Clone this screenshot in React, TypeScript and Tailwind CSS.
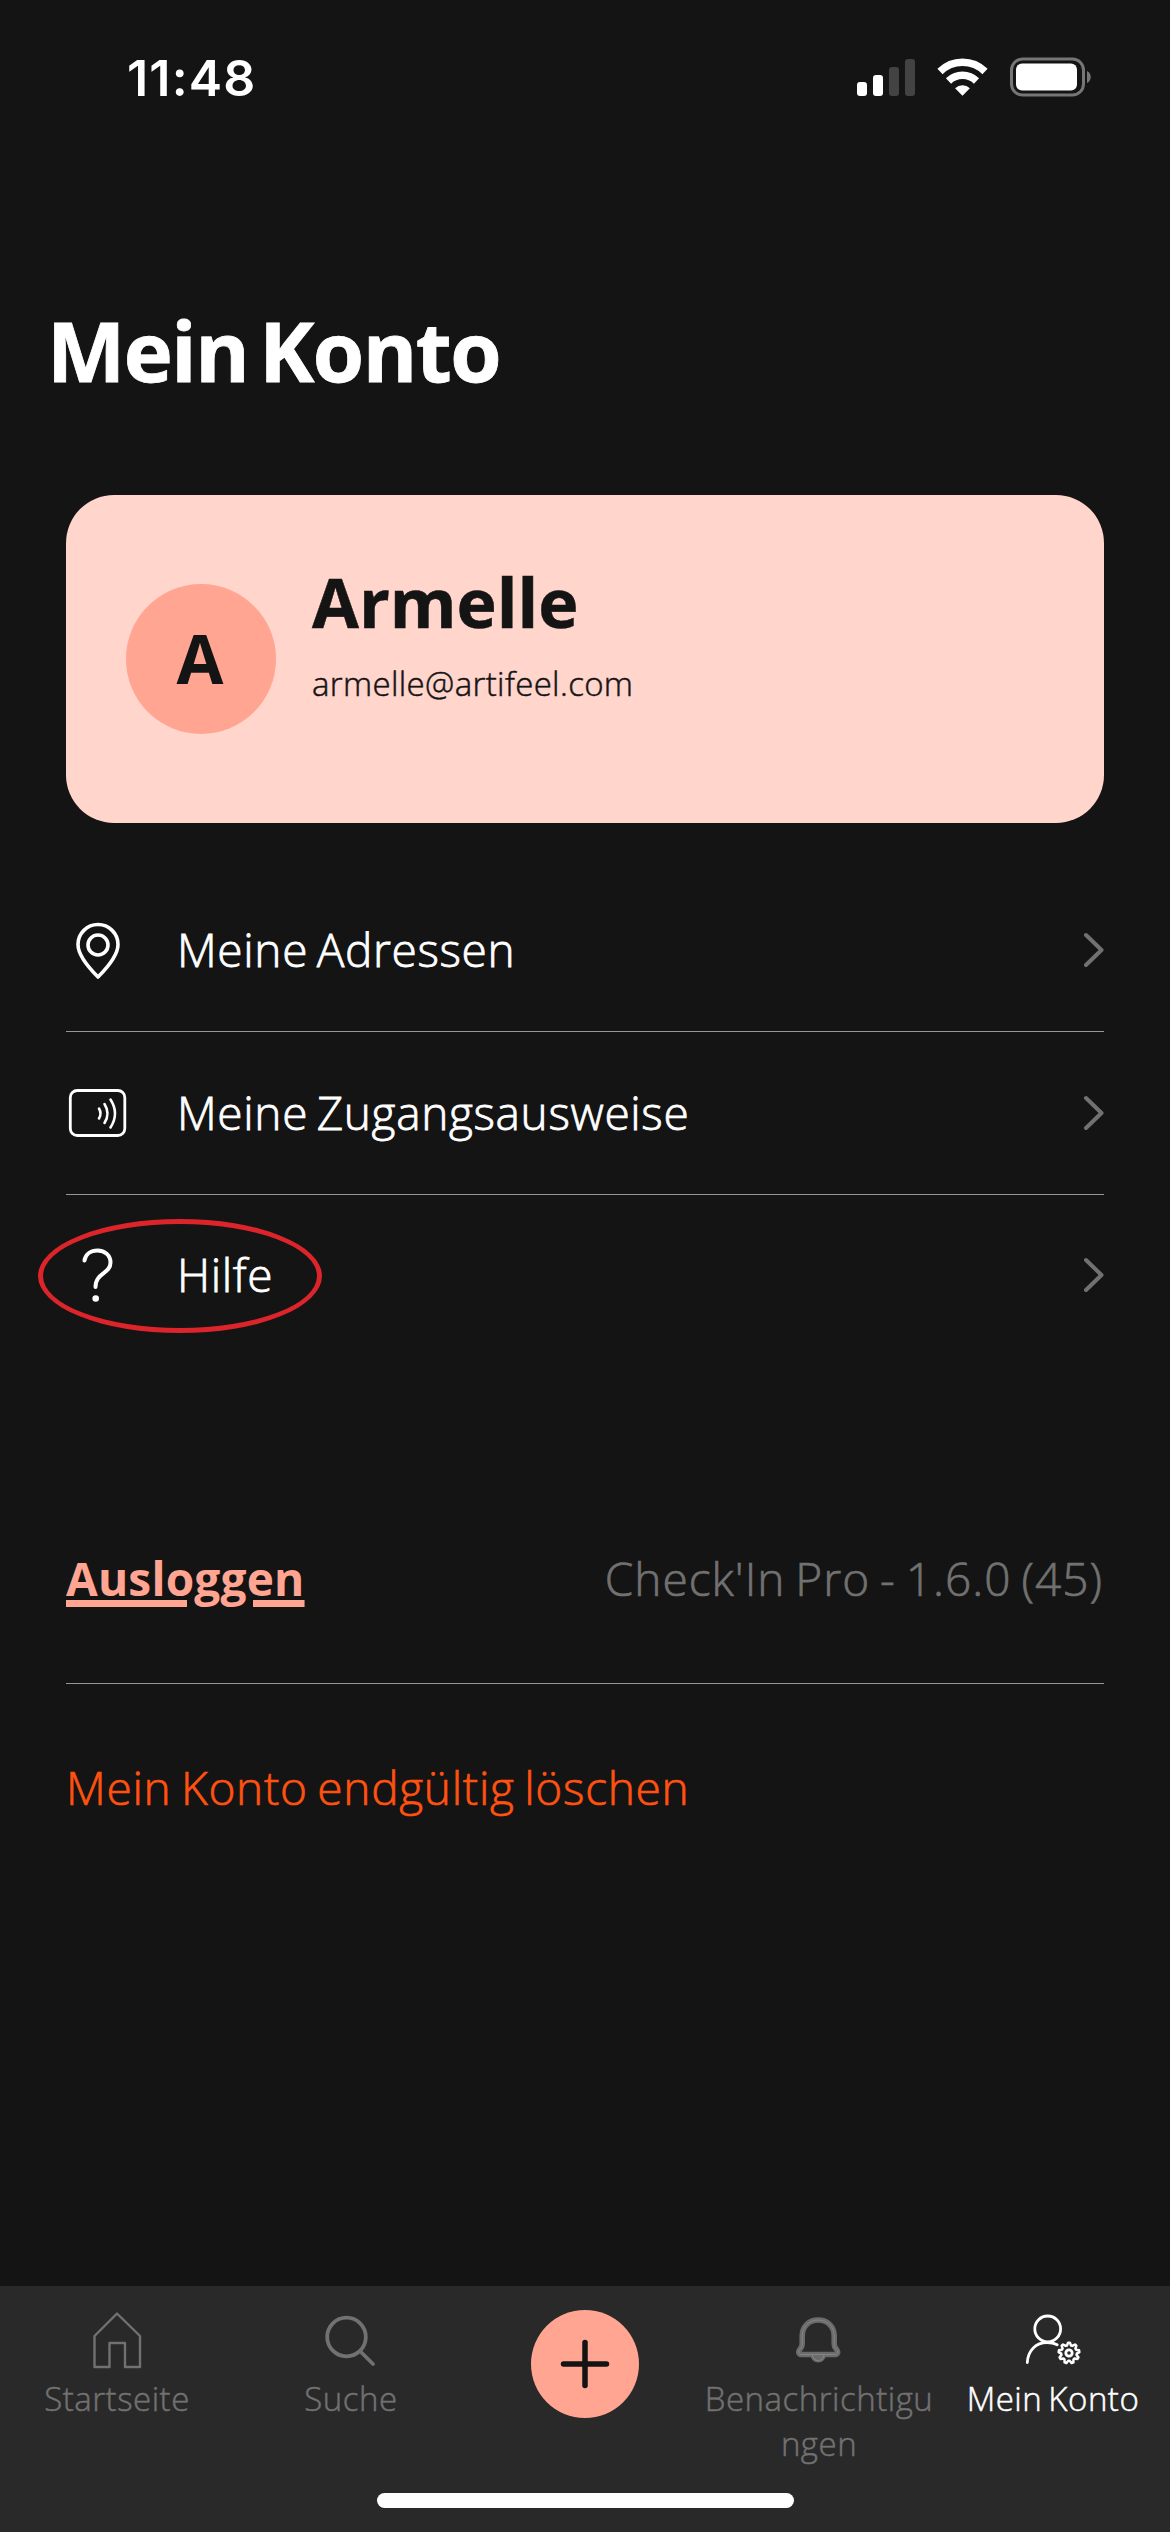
import type { ReactNode } from 'react'

function StatusBar() {
  return (
    <div className="h-[156px] pl-[127px] pr-[78px] flex items-start justify-between">
      <span className="mt-[48px] h-[60px] leading-[60px] text-[50px] font-semibold tracking-[1.2px] font-['Inter',sans-serif]">11:48</span>
      <div className="mt-[57px] flex items-center gap-[22px]">
        <svg width="58" height="38" viewBox="0 0 58 38" fill="#fff">
          <rect x="0" y="24" width="10" height="14" rx="3" />
          <rect x="16" y="17" width="10" height="21" rx="3" />
          <rect x="32" y="9" width="10" height="29" rx="3" fill="#434343" />
          <rect x="48" y="1" width="10" height="37" rx="3" fill="#434343" />
        </svg>
        <svg width="51" height="38" viewBox="0 0 51 38" fill="none" stroke="#fff" strokeWidth="7.4">
          <path d="M3 13.5a32 32 0 0 1 45 0" />
          <path d="M11.5 23a20 20 0 0 1 28 0" />
          <path d="M25.5 37.8l-7.4-7.6a11 11 0 0 1 14.8 0z" fill="#fff" stroke="none" />
        </svg>
        <svg width="82" height="40" viewBox="0 0 82 40">
          <rect x="1.5" y="2" width="72" height="36" rx="11" fill="none" stroke="#767676" strokeWidth="3" />
          <rect x="6" y="6.5" width="61" height="27" rx="6" fill="#fff" />
          <path d="M77 14c5 2 5 10 0 12z" fill="#767676" />
        </svg>
      </div>
    </div>
  )
}

function PinIcon() {
  return (
    <svg width="64" height="64" viewBox="0 0 64 64" fill="none" stroke="#fff" strokeWidth="3.6" strokeLinejoin="round">
      <path d="M32 59C25 52 12 38 12 26.500a20 20 0 0 1 40 0C52 38 39 52 32 59z" />
      <circle cx="32" cy="27" r="10" />
    </svg>
  )
}

function BadgeIcon() {
  return (
    <svg width="64" height="64" viewBox="0 0 64 64" fill="none" stroke="#fff" strokeLinecap="round">
      <rect x="4.300" y="9.500" width="54.500" height="45" rx="7" strokeWidth="2.800" />
      <path d="M33 27.500q3 5 0 10M38.500 23q6 9.500 0 19M44.500 18.500q9 14 0 28" strokeWidth="2.600" />
    </svg>
  )
}

function HelpIcon() {
  return (
    <svg width="64" height="64" viewBox="0 0 64 64" fill="none" stroke="#fff" strokeWidth="4" strokeLinecap="round">
      <path d="M18.500 17.500C19.500 11 25 7.500 31.500 7.500c7.500 0 13 5 13 12 0 11.500-15 10-15 24.500" />
      <circle cx="29.700" cy="55.500" r="3.300" fill="#fff" stroke="none" />
    </svg>
  )
}

function MenuRow({ icon, label, last }: { icon: ReactNode; label: string; last?: boolean }) {
  return (
    <div className={'flex items-center ' + (last ? 'h-[160px]' : 'h-[163px] border-b border-[#969696]')}>
      <div className="w-[111px]">{icon}</div>
      <span className="flex-1 -mt-[2px] text-[46px] font-light whitespace-nowrap tracking-[0.65px] [word-spacing:-4px] [-webkit-text-stroke:0.8px_#fff]">{label}</span>
      <svg width="22" height="38" viewBox="0 0 22 38" fill="none" stroke="#717171" strokeWidth="4" strokeLinecap="round" strokeLinejoin="round">
        <path d="M4 4l15.500 15L4 34" />
      </svg>
    </div>
  )
}

function HomeIcon() {
  return (
    <svg width="60" height="64" viewBox="0 0 60 64" fill="none" stroke="currentColor" strokeWidth="2.400" strokeLinejoin="round">
      <path d="M7.500 28L30 5.500 53 28V59H38V35H22.500V59h-15z" />
    </svg>
  )
}

function SearchIcon() {
  return (
    <svg width="60" height="64" viewBox="0 0 60 64" fill="none" stroke="currentColor" strokeWidth="3.800" strokeLinecap="round">
      <circle cx="25.500" cy="29" r="19.300" />
      <path d="M39.500 43.500L52 56" />
    </svg>
  )
}

function BellIcon() {
  const body = 'M29.200 12C19.500 12 13.200 19 13.200 28v8c0 5-3.500 4.500-3.500 8 0 1.500 1 2.500 2.500 2.500h34c1.500 0 2.500-1 2.500-2.500 0-3.500-3.500-3-3.500-8v-8c0-9-6.300-16-16-16z'
  const clapper = 'M23.500 46.500c0 3.500 2.500 6 5.700 6s5.700-2.500 5.700-6'
  return (
    <svg width="60" height="64" viewBox="0 0 60 64" fill="none" strokeLinejoin="round">
      <path d={body} stroke="#6b6b6b" strokeWidth="5.600" />
      <path d={clapper} fill="#6b6b6b" stroke="#6b6b6b" strokeWidth="4" />
      <path d={body} stroke="#858585" strokeWidth="1" />
      <path d={clapper} stroke="#858585" strokeWidth="1" />
    </svg>
  )
}

// nine rounded teeth, four points each
const gear = Array.from({ length: 36 }, (_, i) => {
  const r = i % 4 < 2 ? 10.400 : 7.800
  const a = ((i * 10 - 95) * Math.PI) / 180
  return (46 + r * Math.cos(a)).toFixed(2) + ',' + (45 + r * Math.sin(a)).toFixed(2)
}).join(' ')

function AccountIcon() {
  return (
    <svg width="60" height="64" viewBox="0 0 60 64" fill="none" stroke="currentColor" strokeWidth="2.800" strokeLinecap="round" strokeLinejoin="round">
      <circle cx="24.700" cy="20.900" r="12.900" />
      <path d="M4.300 54.500C5 42.500 13 34.500 24 34.500c4 0 7 .6 10.200 2.200" />
      <polygon points={gear} strokeWidth="2.500" />
      <circle cx="46" cy="45" r="3.200" />
    </svg>
  )
}

function Tab({ icon, label, color }: { icon: ReactNode; label: ReactNode; color: string }) {
  return (
    <div className={'w-[234px] pt-[22px] flex flex-col items-center text-center ' + color}>
      {icon}
      <span className="mt-[4px] text-[33px] leading-[45px] font-light whitespace-nowrap tracking-[0.5px] [word-spacing:-3px] [-webkit-text-stroke:0.5px_currentColor]">{label}</span>
    </div>
  )
}

export default function App() {
  return (
    <div className="w-[1170px] h-[2532px] bg-[#141414] text-white flex flex-col overflow-hidden font-['Open_Sans',sans-serif]">
      <StatusBar />

      <h1 className="mt-[134px] ml-[47px] h-[120px] leading-[120px] text-[83px] font-bold whitespace-nowrap tracking-[-1.5px] [word-spacing:-9px] [-webkit-text-stroke:0.8px_#fff]">Mein Konto</h1>

      <main className="mt-[85px] mx-[66px] flex-1">
        <section className="h-[328px] rounded-[48px] bg-[#ffd5cc] text-[#141414] pl-[60px] flex items-center">
          <div className="size-[150px] rounded-full bg-[#ffa592] flex items-center justify-center pr-[2px] pb-[2px] text-[68px] font-bold">A</div>
          <div className="ml-[36px] -mt-[41px]">
            <div className="text-[68px] leading-[90px] font-bold [-webkit-text-stroke:0.5px_#141414]">Armelle</div>
            <div className="text-[33px] leading-[74px] font-light tracking-[0.35px] [-webkit-text-stroke:0.5px_#141414]">armelle@artifeel.com</div>
          </div>
        </section>

        <nav className="mt-[46px] relative">
          <MenuRow icon={<PinIcon />} label="Meine Adressen" />
          <MenuRow icon={<BadgeIcon />} label="Meine Zugangsausweise" />
          <MenuRow icon={<HelpIcon />} label="Hilfe" last />
          <div className="absolute left-[-28px] top-[350px] w-[284px] h-[114px] rounded-[50%] border-[5px] border-[#dc242b]" />
        </nav>

        <div className="mt-[125px] h-[204px] pb-[7px] border-b border-[#969696] flex items-center justify-between text-[46px]">
          <span className="font-bold text-[#ffa592] tracking-[0.2px] underline decoration-[7px] underline-offset-[4px]">Ausloggen</span>
          <span className="pr-[1px] font-light text-[#717171] tracking-[1px] [word-spacing:-3px] [-webkit-text-stroke:0.7px_#717171]">Check'In Pro - 1.6.0 (45)</span>
        </div>

        <p className="mt-[69px] text-[46px] font-light text-[#ff5210] tracking-[0.7px] [word-spacing:-3px] [-webkit-text-stroke:0.7px_#ff5210]">Mein Konto endgültig löschen</p>
      </main>

      <footer className="h-[246px] bg-[#292929] flex flex-col">
        <div className="h-[207px] flex">
          <Tab icon={<HomeIcon />} label="Startseite" color="text-[#717171]" />
          <Tab icon={<SearchIcon />} label="Suche" color="text-[#717171]" />
          <div className="w-[234px] pt-[24px] flex justify-center">
            <div className="size-[108px] rounded-full bg-[#ffa592] flex items-center justify-center">
              <svg width="50" height="50" viewBox="0 0 50 50" stroke="#141414" strokeWidth="5.500" strokeLinecap="round">
                <path d="M25 3.500v43M3.500 25h43" />
              </svg>
            </div>
          </div>
          <Tab icon={<BellIcon />} label={<>Benachrichtigu<br />ngen</>} color="text-[#717171]" />
          <Tab icon={<AccountIcon />} label="Mein Konto" color="text-white" />
        </div>
        <div className="w-[417px] h-[15px] rounded-full bg-white mx-auto" />
      </footer>
    </div>
  )
}
